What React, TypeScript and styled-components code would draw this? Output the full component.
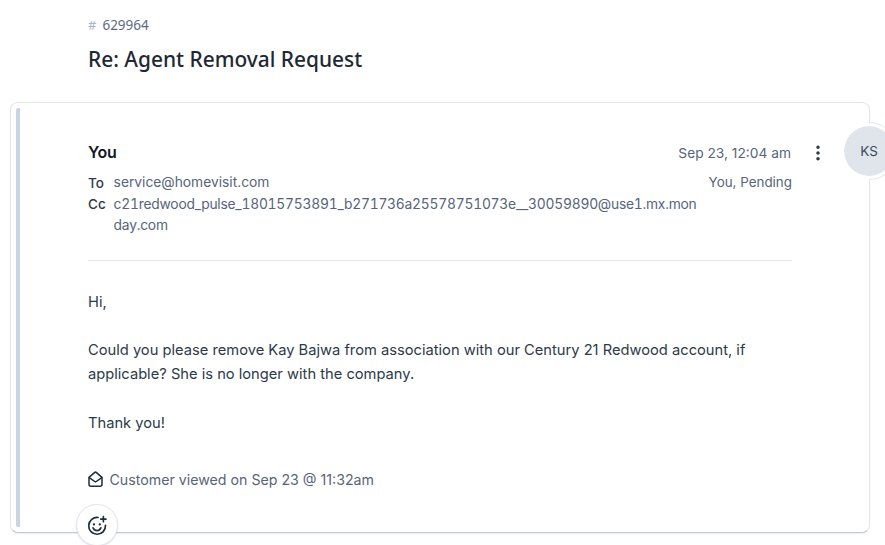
import { createGlobalStyle, styled } from 'styled-components'
import { EllipsisVertical } from 'lucide-react'

const GlobalStyle = createGlobalStyle`
  html, body {
    margin: 0;
    height: 100%;
    overflow: hidden;
    background: #fff;
    font-family: Inter, "Liberation Sans", sans-serif;
  }
`

const Page = styled.div`
  width: 885px;
  height: 545px;
  overflow: hidden;
  padding: 16px 0 0 10px;
  box-sizing: border-box;
`

const TicketHeader = styled.header`
  padding-left: 78px;
  height: 86px;
`

const TicketId = styled.div`
  display: flex;
  align-items: center;
  gap: 6px;
  height: 18px;
  font-family: "Noto Sans", sans-serif;
  font-size: 13.5px;
  color: #5c6b80;
`

const Hash = styled.span`
  font-size: 13px;
  color: #a9b5c4;
`

const Title = styled.h1`
  margin: 12px 0 0;
  font-family: "Noto Sans", sans-serif;
  font-size: 20.9px;
  line-height: 26px;
  font-weight: 500;
  color: #1f2933;
`

const Card = styled.section`
  position: relative;
  width: 860px;
  height: 431px;
  box-sizing: border-box;
  padding: 5px;
  background: #fff;
  border: 1px solid #e2e7ed;
  border-bottom-color: #c4cad2;
  border-radius: 8px;
  box-shadow: 0 1px 1px rgba(24, 50, 71, 0.08);
`

const Stripe = styled.div`
  display: flex;
  height: 100%;
  box-sizing: border-box;
  padding: 34px 0 0 68px;
  border-left: 4px solid #c9d5e1;
  border-radius: 2px;
`

const Message = styled.article`
  width: 704px;
`

const MessageTop = styled.div`
  display: flex;
  align-items: center;
  justify-content: space-between;
  height: 20px;
`

const Sender = styled.div`
  font-size: 16px;
  font-weight: 600;
  letter-spacing: -0.3px;
  color: #12181f;
`

const Meta = styled.div`
  display: flex;
  align-items: center;
  font-size: 13.75px;
  color: #56657a;
  position: relative;
  top: 1px;
  padding-right: 1px;
`

const MoreButton = styled.span`
  position: absolute;
  left: 100%;
  margin-left: 16px;
  top: -2px;
  display: flex;
  color: #2c3a4a;
`

const Recipients = styled.div`
  display: grid;
  grid-template-columns: 25.6px 1fr auto;
  margin-top: 10px;
  font-size: 13.8px;
  line-height: 21.5px;
  color: #56657a;
`

const Label = styled.span`
  position: relative;
  top: 0.5px;
  font-size: 13.5px;
  font-weight: 500;
  color: #2c3a4a;
`

const Address = styled.span`
  width: 586px;
  overflow-wrap: anywhere;
`

const LongAddress = styled(Address)`
  font-variant-numeric: tabular-nums;
  letter-spacing: -0.22px;
`

const Status = styled.span`
  font-size: 13.4px;
  text-align: right;
`

const Divider = styled.hr`
  margin: 23px 0 0;
  border: 0;
  border-top: 1px solid #e2e7ed;
`

const Body = styled.div`
  margin-top: 29px;
  font-size: 14.7px;
  line-height: 24.3px;
  color: #2c3a4a;

  p {
    margin: 0 0 24.3px;
  }
`

const ViewedNote = styled.div`
  display: flex;
  align-items: center;
  gap: 7px;
  margin-top: 34px;
  height: 20px;
  font-size: 14.2px;
  color: #56657a;

  svg {
    margin-left: -0.5px;
  }
`

const Avatar = styled.div`
  position: absolute;
  top: 19px;
  right: -29px;
  width: 58px;
  height: 58px;
  box-sizing: border-box;
  display: flex;
  align-items: center;
  justify-content: center;
  background: #dfe5eb;
  background-clip: padding-box;
  border: 4px solid #fff;
  border-radius: 50%;
  font-size: 13.5px;
  color: #3d4b5e;

  &::before {
    content: '';
    position: absolute;
    inset: -4px;
    border: 1px solid #e2e7ed;
    border-radius: 50%;
    clip-path: inset(0 0 0 50%);
  }
`

const ReactionButton = styled.button`
  position: absolute;
  left: 65px;
  bottom: -14px;
  width: 42px;
  height: 42px;
  padding: 0;
  display: flex;
  align-items: center;
  justify-content: center;
  background: #fff;
  border: 1px solid #e2e7ed;
  border-radius: 50%;
  box-shadow: 0 1px 2px rgba(24, 50, 71, 0.14);
`

const OpenMailIcon = () => (
  <svg width="15" height="16" viewBox="0 0 15 16" fill="none" stroke="#1f2d3d" strokeWidth="1.5" strokeLinejoin="round" strokeLinecap="round">
    <path d="M1 6.4 6.5 1.6a1.5 1.5 0 0 1 2 0L14 6.4v6.8a2 2 0 0 1-2 2H3a2 2 0 0 1-2-2Z" />
    <path d="M1.2 6.6 7.5 11l6.3-4.4" />
  </svg>
)

const SmilePlusIcon = () => (
  <svg width="21" height="21" viewBox="0 0 20 20" fill="none" stroke="#1f2d3d" strokeWidth="1.6" strokeLinecap="round">
    <path d="M10.6 2.4a8 8 0 1 0 7 7.4" />
    <path d="M5.8 12.2c.8 1.7 2.2 2.6 3.7 2.6s2.9-.9 3.7-2.6" />
    <path d="M15.6 1.4v5M13.1 3.9h5" />
    <circle cx="6.6" cy="9" r="1.1" fill="#1f2d3d" stroke="none" />
    <circle cx="12.2" cy="9" r="1.1" fill="#1f2d3d" stroke="none" />
  </svg>
)

export default function App() {
  return (
    <Page>
      <GlobalStyle />
      <TicketHeader>
        <TicketId>
          <Hash>#</Hash>
          <span>629964</span>
        </TicketId>
        <Title>Re: Agent Removal Request</Title>
      </TicketHeader>
      <Card>
        <Stripe>
          <Message>
            <MessageTop>
              <Sender>You</Sender>
              <Meta>
                Sep 23, 12:04 am
                <MoreButton>
                  <EllipsisVertical size={20} strokeWidth={2.2} />
                </MoreButton>
              </Meta>
            </MessageTop>
            <Recipients>
              <Label>To</Label>
              <Address>service@homevisit.com</Address>
              <Status>You, Pending</Status>
              <Label>Cc</Label>
              <LongAddress>c21redwood_pulse_18015753891_b271736a25578751073e__30059890@use1.mx.monday.com</LongAddress>
            </Recipients>
            <Divider />
            <Body>
              <p>Hi,</p>
              <p>
                Could you please remove Kay Bajwa from association with our Century 21 Redwood account, if applicable? She is no longer with the company.
              </p>
              <p>Thank you!</p>
            </Body>
            <ViewedNote>
              <OpenMailIcon />
              Customer viewed on Sep 23 @ 11:32am
            </ViewedNote>
          </Message>
        </Stripe>
        <Avatar>KS</Avatar>
        <ReactionButton>
          <SmilePlusIcon />
        </ReactionButton>
      </Card>
    </Page>
  )
}
